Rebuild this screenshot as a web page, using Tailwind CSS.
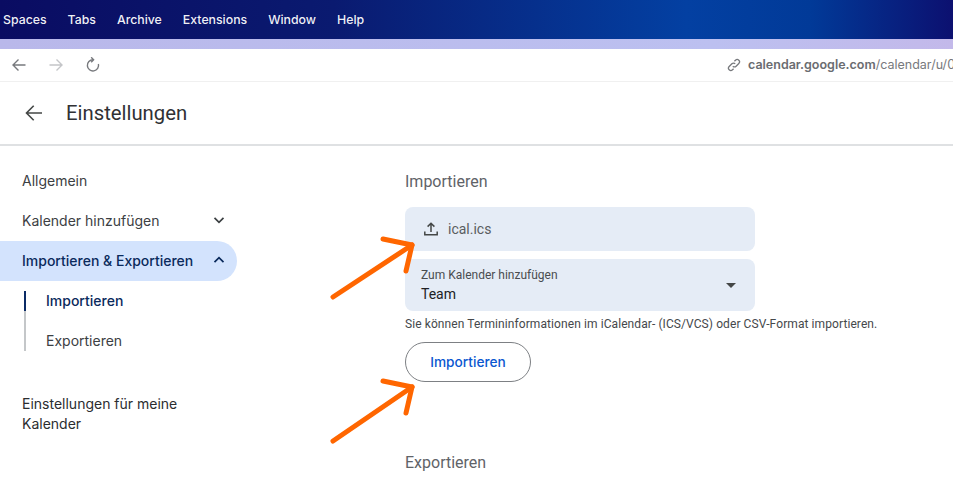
<!DOCTYPE html>
<html lang="de">
<head>
  <meta charset="UTF-8">
  <meta name="viewport" content="width=device-width, initial-scale=1.0">
  <title>Einstellungen</title>
  <script src="https://cdn.jsdelivr.net/npm/@tailwindcss/browser@4"></script>
</head>
<body class="relative h-[485px] w-[953px] overflow-hidden bg-white font-['Roboto',sans-serif]">
  <!-- Menu bar -->
  <div class="flex h-[39px] items-center gap-[21px] bg-[linear-gradient(90deg,#0a0c62_0%,#0a1a70_35%,#0340a2_72%,#013a98_85%,#0c1070_100%)] pl-[3px] pt-px font-['Inter',sans-serif] text-[12.3px] font-medium text-white/95">
    <span>Spaces</span>
    <span>Tabs</span>
    <span>Archive</span>
    <span>Extensions</span>
    <span>Window</span>
    <span>Help</span>
  </div>

  <!-- Browser toolbar -->
  <div class="h-[10px] bg-[linear-gradient(90deg,#b9b8ea_0%,#bcc0f0_75%,#c3b9ea_100%)]"></div>
  <div class="flex h-[33px] items-center rounded-tl-[4px] border-b border-[#f0f0f0] bg-white pl-[11px] pr-0">
    <svg class="h-[16px] w-[16px]" viewBox="0 0 16 16" fill="none" stroke="#77797d" stroke-width="1.4"><path d="M14.5 8H2M7.5 2.5 2 8l5.5 5.5"/></svg>
    <svg class="ml-[21px] h-[16px] w-[16px]" viewBox="0 0 16 16" fill="none" stroke="#c4c5c8" stroke-width="1.4"><path d="M1.5 8H14M8.5 2.5 14 8l-5.5 5.5"/></svg>
    <svg class="ml-[21px] h-[16px] w-[16px]" viewBox="0 0 16 16" fill="none" stroke="#77797d" stroke-width="1.4"><path d="M8 2.8a5.6 5.6 0 1 0 5.4 4.2"/><path d="M6.2.3 8.6 2.8 6.2 5.2"/></svg>
    <div class="ml-auto flex items-center gap-[7px] whitespace-nowrap font-['Inter',sans-serif] text-[12.5px] text-[#77797d]">
      <svg class="h-[14px] w-[14px]" viewBox="0 0 14 14" fill="none" stroke="#77797d" stroke-width="1.3"><path d="M5.8 8.2a2.3 2.3 0 0 0 3.3 0l2.7-2.7a2.3 2.3 0 0 0-3.3-3.3L7.4 3.3"/><path d="M8.2 5.8a2.3 2.3 0 0 0-3.3 0L2.2 8.5a2.3 2.3 0 0 0 3.3 3.3l1.1-1.1"/></svg>
      <span class="w-[205px] overflow-hidden"><b class="font-semibold text-[#6a6c70]">calendar.google.com</b>/calendar/u/0/r/settings</span>
    </div>
  </div>

  <!-- Page header -->
  <header class="flex h-[64px] items-center border-b-2 border-[#dfe1e3] pl-[25px]">
    <svg class="h-[18px] w-[18px]" viewBox="0 0 18 18" fill="none" stroke="#444746" stroke-width="1.6"><path d="M17 9H1.5M8.7 1.7 1.5 9l7.2 7.3"/></svg>
    <h1 class="ml-[23px] text-[20.3px] text-[#303134]">Einstellungen</h1>
  </header>

  <div class="flex">
    <!-- Sidebar -->
    <nav class="w-[237px] shrink-0 pt-[15px] font-['Inter',sans-serif] text-[14px] text-[#3c4043]">
      <div class="flex h-[40px] items-center pb-[2px] pl-[22px]">Allgemein</div>
      <div class="flex h-[40px] items-center justify-between pb-[2px] pl-[22px] pr-[11px]">
        <span>Kalender hinzufügen</span>
        <svg class="h-[14px] w-[14px]" viewBox="0 0 14 14" fill="none" stroke="#3c4043" stroke-width="1.7"><path d="M2.5 4.8 7 9.3l4.5-4.5"/></svg>
      </div>
      <div class="flex h-[40px] items-center justify-between rounded-r-full bg-[#d3e3fd] pb-[2px] pl-[22px] pr-[11px] font-medium text-[#0a2a5c]">
        <span>Importieren &amp; Exportieren</span>
        <svg class="h-[14px] w-[14px]" viewBox="0 0 14 14" fill="none" stroke="#0a2a5c" stroke-width="1.7"><path d="M2.5 9.2 7 4.7l4.5 4.5"/></svg>
      </div>
      <div class="flex pl-[24px]">
        <div class="pt-[10px]">
          <div class="h-[20px] w-[2px] bg-[#0b2b66]"></div>
          <div class="h-[40px] w-[2px] bg-[#c4c7c9]"></div>
        </div>
        <div class="ml-[20px]">
          <div class="flex h-[40px] items-center pb-[2px] font-medium text-[#0a2a5c]">Importieren</div>
          <div class="flex h-[40px] items-center pb-[2px]">Exportieren</div>
        </div>
      </div>
      <div class="mt-[33px] pl-[22px] leading-[20px] text-[#2b2d30]">Einstellungen für meine<br>Kalender</div>
    </nav>

    <!-- Import form -->
    <main class="ml-[168px] w-[350px] shrink-0 pt-[26px]">
      <h2 class="text-[16px] leading-[20px] text-[#5f6368]">Importieren</h2>
      <div class="mt-[15px] flex h-[44px] items-center rounded-[8px] bg-[#e5ecf6] pl-[18px] text-[14px] text-[#5a5d60]">
        <svg class="h-[16px] w-[16px]" viewBox="0 0 16 16" fill="none" stroke="#444746" stroke-width="1.5"><path d="M8 11V2.5M4.6 5.6 8 2.2l3.4 3.4M1.8 10.5v3.2h12.4v-3.2"/></svg>
        <span class="ml-[9px]">ical.ics</span>
      </div>
      <div class="mt-[8px] flex h-[52px] items-center justify-between rounded-[8px] bg-[#e5ecf6] pl-[16px] pr-[19px]">
        <div>
          <div class="text-[12px] leading-[16px] text-[#4a4d50]">Zum Kalender hinzufügen</div>
          <div class="pt-px text-[14px] leading-[20px] text-[#202124]">Team</div>
        </div>
        <div class="h-0 w-0 border-x-[5px] border-t-[5px] border-x-transparent border-t-[#444746]"></div>
      </div>
      <p class="mt-[5px] whitespace-nowrap text-[12px] leading-[16px] tracking-[0.085px] text-[#45484b]">Sie können Termininformationen im iCalendar- (ICS/VCS) oder CSV-Format importieren.</p>
      <button class="mt-[10px] h-[40px] w-[126px] rounded-full border border-[#7d8084] font-['Inter',sans-serif] text-[13.7px] font-medium text-[#0b57d0]">Importieren</button>
      <h2 class="mt-[71px] text-[16px] leading-[20px] text-[#5f6368]">Exportieren</h2>
    </main>
  </div>

  <!-- Annotation arrows -->
  <svg class="pointer-events-none absolute left-[325px] top-[230px] h-[70px] w-[95px]" viewBox="0 0 95 70" fill="none" stroke="#ff6600" stroke-width="5" stroke-linecap="round" stroke-linejoin="round"><path d="M8 67 87 15"/><path d="M58 9 87 15 81 41"/></svg>
  <svg class="pointer-events-none absolute left-[325px] top-[378px] h-[70px] w-[95px]" viewBox="0 0 95 70" fill="none" stroke="#ff6600" stroke-width="5" stroke-linecap="round" stroke-linejoin="round"><path d="M8 63 87 9"/><path d="M58 3 87 9 81 35"/></svg>
</body>
</html>
